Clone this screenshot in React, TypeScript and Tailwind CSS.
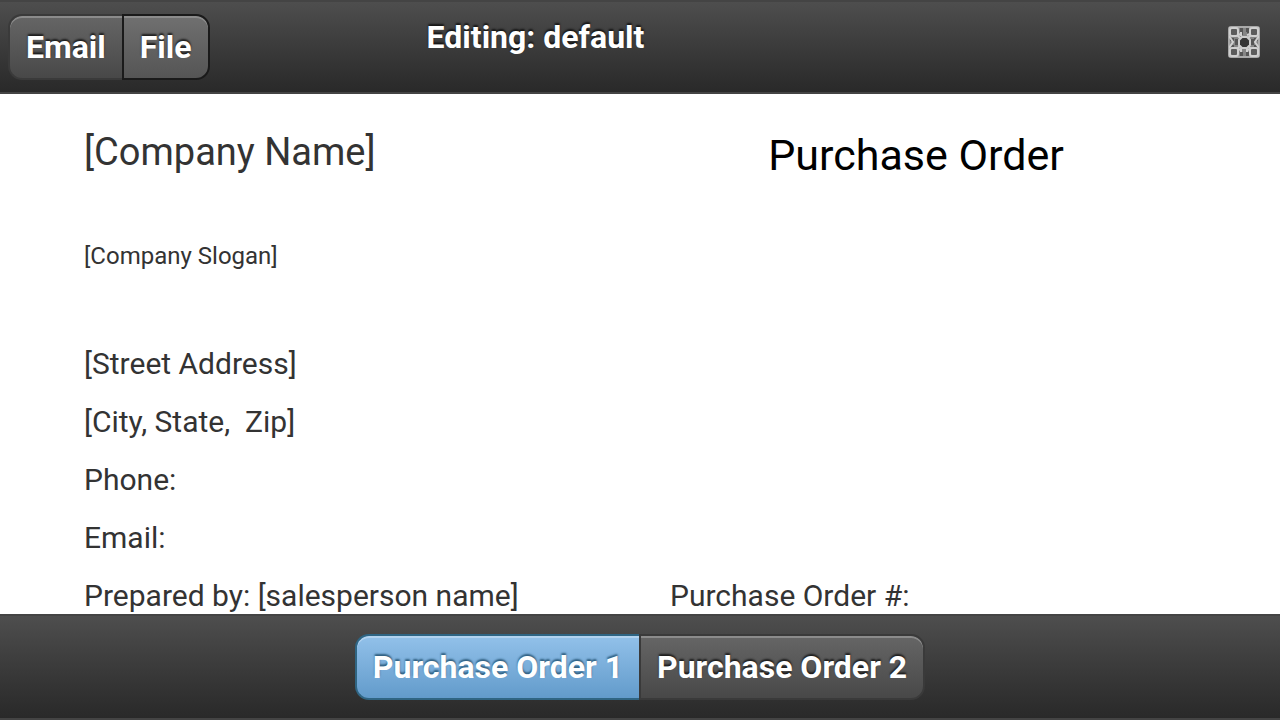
type SheetRow = {
  height: string
  left: string
  leftClass?: string
  right?: string
  rightClass?: string
}

const rows: SheetRow[] = [
  {
    height: 'h-[116px]',
    left: '[Company Name]',
    leftClass: 'text-[38px]',
    right: 'Purchase Order',
    rightClass: 'pt-1.5 text-center text-[43px] text-black',
  },
  { height: 'h-[92px]', left: '[Company Slogan]', leftClass: 'text-[24px]' },
  { height: 'h-[33px]', left: '' },
  { height: 'h-[58px]', left: '[Street Address]' },
  { height: 'h-[58px]', left: '[City, State,  Zip]' },
  { height: 'h-[58px]', left: 'Phone:' },
  { height: 'h-[58px]', left: 'Email:' },
  {
    height: 'h-[58px]',
    left: 'Prepared by: [salesperson name]',
    right: 'Purchase Order #:',
  },
]

const barClass =
  'shrink-0 border-y-2 border-[#444444] bg-linear-to-b from-[#4e4e4e] to-[#292929]'

const buttonClass =
  'h-[66px] border-2 px-4 text-[32px] leading-[38px] font-bold text-white'

const darkText = '[text-shadow:0_-2px_2px_rgb(0_0_0/0.7)]'

const darkFill =
  'border-[#3a3a3a] bg-linear-to-b from-[#666666] to-[#484848] shadow-[inset_0_2px_0_rgb(255_255_255/0.25)]'

function GridIcon() {
  return (
    <svg viewBox="0 0 32 32" className="h-8 w-8" aria-hidden="true">
      <defs>
        <filter id="soften" x="0" y="0" width="1" height="1">
          <feGaussianBlur stdDeviation="0.6" />
        </filter>
      </defs>
      <rect width="32" height="32" rx="3" fill="#a8a8a8" />
      <g filter="url(#soften)">
        <rect x="1" y="1" width="30" height="30" rx="2" fill="#858585" />
        <g fill="#555555">
          <path d="M12 2h3v4h-3zM18 2h3v4h-3zM12 26h3v4h-3zM18 26h3v4h-3z" />
          <path d="M2 12h4v3H2zM26 12h4v3h-4zM2 19h4v3H2zM26 19h4v3h-4z" />
          <path d="M7 13h3v6H7zM23 13h3v6h-3zM13 6h2v3h-2zM19 6h2v3h-2z" />
        </g>
        <g fill="#5c5c5c" stroke="#d0d0d0" strokeWidth="2">
          <rect x="2" y="2" width="8" height="8" rx="2" />
          <rect x="22" y="2" width="8" height="8" rx="2" />
          <rect x="2" y="22" width="8" height="8" rx="2" />
          <rect x="22" y="22" width="8" height="8" rx="2" />
        </g>
        <g fill="none" stroke="#d0d0d0" strokeWidth="2">
          <path d="M9 9l4 4M23 9l-4 4M9 23l4-4M23 23l-4-4" />
          <path d="M10 8l3 1v-3M22 8l-3 1M10 24l3-1v3M22 24l-3-1v3" />
          <path d="M1 10l4 6-4 6M31 10l-4 6 4 6" />
          <path d="M1 1h30v30H1z" strokeWidth="1" />
        </g>
        <path
          d="M14 11h5l3 3v5l-3 3h-5l-3-3v-5z"
          fill="#363636"
          stroke="#cccccc"
          strokeWidth="2"
        />
      </g>
    </svg>
  )
}

function TopBar() {
  return (
    <header
      className={`${barClass} grid h-[94px] grid-cols-[17fr_auto_25fr] items-start pr-5 pl-2`}
    >
      <div className="flex pt-3">
        <button
          type="button"
          className={`${buttonClass} ${darkText} ${darkFill} rounded-l-[14px] border-r-0`}
        >
          Email
        </button>
        <button
          type="button"
          className={`${buttonClass} ${darkText} rounded-r-[14px] border-[#1a1a1a] bg-linear-to-b from-[#707070] to-[#555555] shadow-[inset_0_2px_0_rgb(255_255_255/0.2)]`}
        >
          File
        </button>
      </div>
      <h1 className={`pt-4 text-[32px] leading-[38px] font-bold text-white ${darkText}`}>
        Editing: default
      </h1>
      <div className="flex justify-end pt-6">
        <button type="button" aria-label="Full screen">
          <GridIcon />
        </button>
      </div>
    </header>
  )
}

function Sheet() {
  return (
    <main className="min-h-0 flex-1 overflow-hidden bg-white pr-[118px] pl-[84px]">
      <table className="w-full table-fixed border-collapse text-[30px] leading-[36px] text-[#333333]">
        <colgroup>
          <col className="w-[54.36%]" />
          <col />
        </colgroup>
        <tbody>
          {rows.map((row, index) => (
            <tr key={index} className={row.height}>
              <td className={`p-0 whitespace-pre ${row.leftClass ?? ''}`}>{row.left}</td>
              <td className={`p-0 whitespace-pre ${row.rightClass ?? ''}`}>{row.right}</td>
            </tr>
          ))}
        </tbody>
      </table>
    </main>
  )
}

function SheetTabs() {
  return (
    <footer className={`${barClass} flex h-[106px] items-center justify-center`}>
      <button
        type="button"
        aria-pressed="true"
        className={`${buttonClass} rounded-l-[14px] border-r-0 border-[#2f6583] bg-linear-to-b from-[#92c1ea] to-[#629bcb] shadow-[inset_0_2px_0_rgb(255_255_255/0.3)] [text-shadow:0_-2px_2px_#2f5f80]`}
      >
        Purchase Order 1
      </button>
      <button
        type="button"
        aria-pressed="false"
        className={`${buttonClass} ${darkText} ${darkFill} rounded-r-[14px]`}
      >
        Purchase Order 2
      </button>
    </footer>
  )
}

export default function App() {
  return (
    <div className="flex h-screen flex-col overflow-hidden font-['Roboto',sans-serif]">
      <TopBar />
      <Sheet />
      <SheetTabs />
    </div>
  )
}
